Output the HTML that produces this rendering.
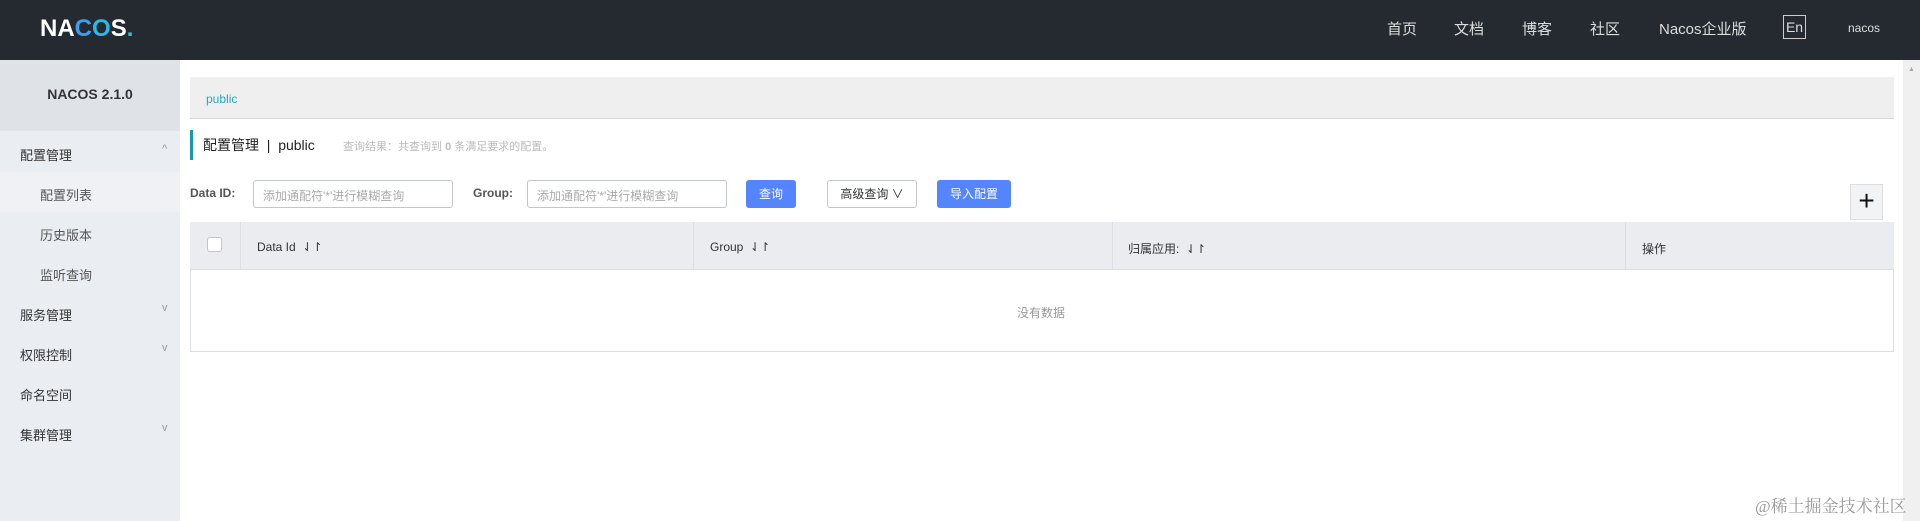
<!DOCTYPE html>
<html><head><meta charset="utf-8"><style>
*{margin:0;padding:0;box-sizing:border-box}
body{width:1920px;height:521px;overflow:hidden;font-family:"Liberation Sans","Noto Sans CJK SC",sans-serif;background:#fff;position:relative;color:#333}
.a{position:absolute;white-space:nowrap}
.hdr{left:0;top:0;width:1920px;height:60px;background:#252a31}
.nav{color:#ddd;font-size:15px;top:18px}
.side{left:0;top:60px;width:180px;height:461px;background:#eaedf1}
.mi{font-size:13px;color:#333;left:20px}
.si{font-size:13px;color:#555;left:40px}
.car{font-size:11px;color:#999;left:162px}
.in{border:1px solid #c4c6cf;border-radius:3px;height:28px;font-size:12px;color:#aaa;padding:6px 9px;background:#fff}
.th{font-size:12px;color:#333;top:240px}
</style></head><body>
<div class="a hdr"></div>
<div class="a" style="left:40px;top:15px;font-size:24px;font-weight:bold;color:#fff;letter-spacing:0px">NA<span style="color:#3a9ff5">C</span><span style="color:#2bb9e8">O</span>S<span style="color:#2bc3d5">.</span></div>
<div class="a nav" style="left:1387px">首页</div>
<div class="a nav" style="left:1454px">文档</div>
<div class="a nav" style="left:1522px">博客</div>
<div class="a nav" style="left:1590px">社区</div>
<div class="a nav" style="left:1659px">Nacos企业版</div>
<div class="a" style="left:1783px;top:15px;width:23px;height:24px;border:1px solid #ccc;color:#ddd;font-size:14px;text-align:center;line-height:22px">En</div>
<div class="a" style="left:1848px;top:21px;color:#ddd;font-size:12px">nacos</div>

<div class="a side"></div>
<div class="a" style="left:0;top:60px;width:180px;height:71px;background:#dfe3e8"></div>
<div class="a" style="left:0;top:86px;width:180px;text-align:center;font-size:14px;font-weight:bold;color:#333">NACOS 2.1.0</div>
<div class="a" style="left:0;top:172px;width:180px;height:40px;background:#eff1f4"></div>
<div class="a mi" style="top:145px">配置管理</div><div class="a car" style="top:143px">^</div>
<div class="a si" style="top:185px">配置列表</div>
<div class="a si" style="top:225px">历史版本</div>
<div class="a si" style="top:265px">监听查询</div>
<div class="a mi" style="top:305px">服务管理</div><div class="a car" style="top:302px">v</div>
<div class="a mi" style="top:345px">权限控制</div><div class="a car" style="top:342px">v</div>
<div class="a mi" style="top:385px">命名空间</div>
<div class="a mi" style="top:425px">集群管理</div><div class="a car" style="top:422px">v</div>

<div class="a" style="left:190px;top:77px;width:1704px;height:42px;background:#efefef;border-bottom:1px solid #d6d6d6"></div>
<div class="a" style="left:206px;top:92px;font-size:12px;color:#23a8c4">public</div>
<div class="a" style="left:190px;top:130px;width:3px;height:30px;background:#1799b5"></div>
<div class="a" style="left:203px;top:135px;font-size:14px;color:#222">配置管理 &nbsp;| &nbsp;public</div>
<div class="a" style="left:343px;top:138px;font-size:11px;color:#bbb">查询结果：共查询到 <b>0</b> 条满足要求的配置。</div>

<div class="a" style="left:190px;top:186px;font-size:12px;font-weight:bold;color:#555">Data ID:</div>
<div class="a in" style="left:253px;top:180px;width:200px">添加通配符'*'进行模糊查询</div>
<div class="a" style="left:473px;top:186px;font-size:12px;font-weight:bold;color:#555">Group:</div>
<div class="a in" style="left:527px;top:180px;width:200px">添加通配符'*'进行模糊查询</div>
<div class="a" style="left:746px;top:180px;width:50px;height:28px;background:#5584ff;border-radius:3px;color:#fff;font-size:12px;text-align:center;line-height:28px">查询</div>
<div class="a" style="left:827px;top:180px;width:90px;height:28px;border:1px solid #c4c6cf;border-radius:3px;color:#333;font-size:12px;text-align:center;line-height:26px">高级查询 ∨</div>
<div class="a" style="left:937px;top:180px;width:74px;height:28px;background:#5584ff;border-radius:3px;color:#fff;font-size:12px;text-align:center;line-height:28px">导入配置</div>
<div class="a" style="left:1850px;top:184px;width:33px;height:36px;background:#f2f3f5;border:1px solid #ddd;font-size:28px;line-height:32px;text-align:center;color:#111">+</div>

<div class="a" style="left:190px;top:222px;width:1704px;height:130px;border:1px solid #dcdee3;background:#fff"></div>
<div class="a" style="left:190px;top:222px;width:1704px;height:48px;background:#ebecf0;border-bottom:1px solid #dcdee3"></div>
<div class="a" style="left:240px;top:222px;width:1px;height:48px;background:#dcdee3"></div>
<div class="a" style="left:693px;top:222px;width:1px;height:48px;background:#dcdee3"></div>
<div class="a" style="left:1112px;top:222px;width:1px;height:48px;background:#dcdee3"></div>
<div class="a" style="left:1625px;top:222px;width:1px;height:48px;background:#dcdee3"></div>
<div class="a" style="left:207px;top:237px;width:15px;height:15px;border:1px solid #c4c6cf;border-radius:3px;background:#fff"></div>
<div class="a th" style="left:257px">Data Id &nbsp;⇃↾</div>
<div class="a th" style="left:710px">Group &nbsp;⇃↾</div>
<div class="a th" style="left:1128px">归属应用: &nbsp;⇃↾</div>
<div class="a th" style="left:1642px">操作</div>
<div class="a" style="left:1017px;top:304px;font-size:12px;color:#999">没有数据</div>

<div class="a" style="left:1903px;top:60px;width:17px;height:461px;background:#f0f0f0"></div>
<div class="a" style="left:1908px;top:66px;font-size:7px;color:#aaa">▲</div>
<div class="a" style="left:1755px;top:492px;font-size:17px;color:#999;font-family:'Liberation Serif','Noto Serif CJK SC',serif">@稀土掘金技术社区</div>
</body></html>
